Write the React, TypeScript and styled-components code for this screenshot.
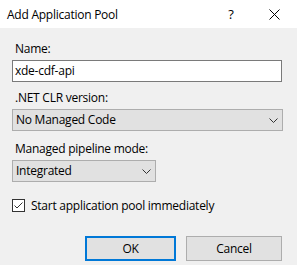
import React from "react";
import styled, { createGlobalStyle } from "styled-components";

const Global = createGlobalStyle`
  html, body { margin: 0; padding: 0; background: #f0f0f0; }
  body { font-family: "Open Sans", "Noto Sans", sans-serif; font-size: 12px; color: #000; letter-spacing: -0.25px; }
  * { box-sizing: border-box; }
`;

const Window = styled.div`
  width: 297px;
  height: 265px;
  background: #f0f0f0;
  display: flex;
  flex-direction: column;
  overflow: hidden;
`;

const TitleBar = styled.div`
  height: 28px;
  background: #fff;
  display: flex;
  align-items: center;
  padding-left: 7px;
`;

const Title = styled.div`
  font-size: 12px;
  line-height: 16px;
  margin-top: 1px;
  flex: 1;
`;

const TitleButton = styled.div<{ $w: number }>`
  width: ${(p) => p.$w}px;
  height: 28px;
  display: flex;
  align-items: center;
  justify-content: center;
  font-size: 13px;
`;

const Body = styled.div`
  padding: 13px 14px 0 12px;
  display: flex;
  flex-direction: column;
`;

const Label = styled.div<{ $mt?: number }>`
  height: 16px;
  line-height: 16px;
  padding-left: 3px;
  margin-top: ${(p) => p.$mt ?? 0}px;
  margin-bottom: 3px;
`;

const TextBox = styled.div`
  height: 22px;
  background: #fff;
  border: 1px solid #7a7a7a;
  padding-left: 2px;
  line-height: 20px;
  width: 270px;
`;

const Select = styled.div<{ $w: number }>`
  height: 22px;
  width: ${(p) => p.$w}px;
  background: #e1e1e1;
  border: 1px solid #adadad;
  display: flex;
  align-items: center;
  padding-left: 3px;
  padding-right: 4px;
  line-height: 20px;
`;

const SelectText = styled.span`
  flex: 1;
`;

const CheckRow = styled.div`
  margin-top: 17px;
  display: flex;
  align-items: center;
  height: 13px;
  gap: 6px;
`;

const CheckBox = styled.div`
  width: 13px;
  height: 13px;
  border: 1px solid #333;
  background: #fff;
  display: flex;
  align-items: center;
  justify-content: center;
`;

const ButtonRow = styled.div`
  margin-top: 24px;
  display: flex;
  justify-content: flex-end;
  gap: 10px;
  padding-right: 1px;
`;

const Button = styled.div<{ $w: number; $default?: boolean }>`
  width: ${(p) => p.$w}px;
  height: 25px;
  background: #e1e1e1;
  border: ${(p) => (p.$default ? "2px solid #0078d7" : "1px solid #adadad")};
  display: flex;
  align-items: center;
  justify-content: center;
`;

const Chevron = () => (
  <svg width="9" height="5" viewBox="0 0 9 5">
    <path d="M0.5 0.5 L4.5 4.5 L8.5 0.5" fill="none" stroke="#333" strokeWidth="1" />
  </svg>
);

export default function App() {
  return (
    <>
      <Global />
      <Window>
        <TitleBar>
          <Title>Add Application Pool</Title>
          <TitleButton $w={40}>?</TitleButton>
          <TitleButton $w={46}>
            <svg width="11" height="11" viewBox="0 0 11 11">
              <path d="M0.5 0.5 L10.5 10.5 M10.5 0.5 L0.5 10.5" stroke="#000" strokeWidth="1" />
            </svg>
          </TitleButton>
        </TitleBar>
        <Body>
          <Label>Name:</Label>
          <TextBox>xde-cdf-api</TextBox>
          <Label $mt={8}>.NET CLR version:</Label>
          <Select $w={271}>
            <SelectText>No Managed Code</SelectText>
            <Chevron />
          </Select>
          <Label $mt={10}>Managed pipeline mode:</Label>
          <Select $w={144}>
            <SelectText>Integrated</SelectText>
            <Chevron />
          </Select>
          <CheckRow>
            <CheckBox>
              <svg width="11" height="11" viewBox="0 0 11 11">
                <path d="M1.5 5.5 L4 8 L9.5 2.5" fill="none" stroke="#333" strokeWidth="1" />
              </svg>
            </CheckBox>
            <span>Start application pool immediately</span>
          </CheckRow>
          <ButtonRow>
            <Button $w={91} $default>OK</Button>
            <Button $w={96}>Cancel</Button>
          </ButtonRow>
        </Body>
      </Window>
    </>
  );
}
